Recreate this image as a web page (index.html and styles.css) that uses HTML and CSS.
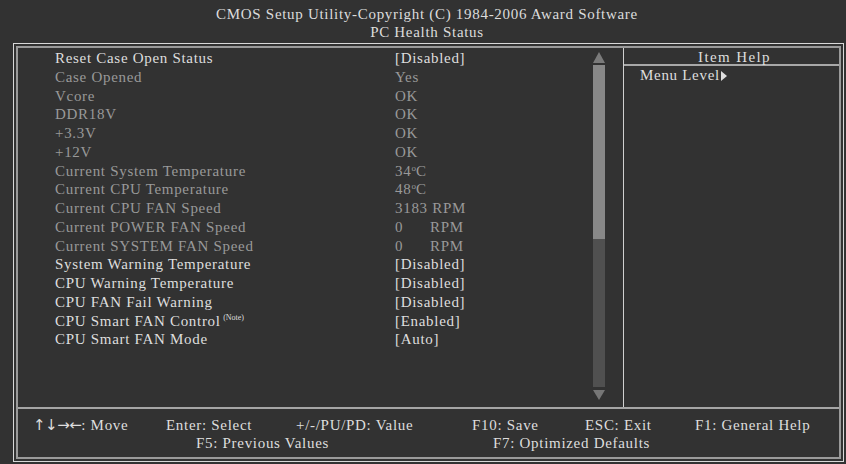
FILE: index.html
```html
<!DOCTYPE html>
<html lang="en">
<head>
  <meta charset="UTF-8" />
  <meta name="viewport" content="width=device-width, initial-scale=1" />
  <title>PC Health Status</title>
  <link rel="stylesheet" href="styles.css">
</head>
<body>
  <div id="title">
    <div>CMOS Setup Utility-Copyright (C) 1984-2006 Award Software</div>
    <div>PC Health Status</div>
  </div>

  <div id="frame">
    <div id="inner">
      <div id="main">
        <ul id="items">
          <li class="row"><span class="label">Reset Case Open Status</span><span>[Disabled]</span></li>
          <li class="row off"><span class="label">Case Opened</span><span>Yes</span></li>
          <li class="row off"><span class="label">Vcore</span><span>OK</span></li>
          <li class="row off"><span class="label">DDR18V</span><span>OK</span></li>
          <li class="row off"><span class="label">+3.3V</span><span>OK</span></li>
          <li class="row off"><span class="label">+12V</span><span>OK</span></li>
          <li class="row off"><span class="label">Current System Temperature</span><span>34<sup class="deg">o</sup>C</span></li>
          <li class="row off"><span class="label">Current CPU Temperature</span><span>48<sup class="deg">o</sup>C</span></li>
          <li class="row off"><span class="label">Current CPU FAN Speed</span><span>3183 RPM</span></li>
          <li class="row off"><span class="label">Current POWER FAN Speed</span><span><span class="num">0</span>RPM</span></li>
          <li class="row off"><span class="label">Current SYSTEM FAN Speed</span><span><span class="num">0</span>RPM</span></li>
          <li class="row"><span class="label">System Warning Temperature</span><span>[Disabled]</span></li>
          <li class="row"><span class="label">CPU Warning Temperature</span><span>[Disabled]</span></li>
          <li class="row"><span class="label">CPU FAN Fail Warning</span><span>[Disabled]</span></li>
          <li class="row"><span class="label">CPU Smart FAN Control <sup class="note">(Note)</sup></span><span>[Enabled]</span></li>
          <li class="row"><span class="label">CPU Smart FAN Mode</span><span>[Auto]</span></li>
        </ul>

        <div id="scroll">
          <span class="arrow up"></span>
          <span class="thumb"></span>
          <span class="track"></span>
          <span class="arrow down"></span>
        </div>

        <div id="help">
          <div class="help-head">Item Help</div>
          <div class="help-body">Menu Level<span class="tri"></span></div>
        </div>
      </div>

      <div id="keys">
        <div class="keys-top">
          <span><span class="arrows">&#8593;&#8595;&#8594;&#8592;</span>: Move</span>
          <span>Enter: Select</span>
          <span>+/-/PU/PD: Value</span>
          <span>F10: Save</span>
          <span>ESC: Exit</span>
          <span>F1: General Help</span>
        </div>
        <div class="keys-bottom">
          <span>F5: Previous Values</span>
          <span>F7: Optimized Defaults</span>
        </div>
      </div>
    </div>
  </div>
</body>
</html>
```

FILE: styles.css
```css
body {
  margin: 0;
  background: #323232;
  color: #dedede;
  font-family: "Liberation Serif", "Times New Roman", serif;
  font-size: 15px;
  letter-spacing: 0.7px;
  width: 846px;
  height: 464px;
  overflow: hidden;
}

#title {
  text-align: center;
  line-height: 18px;
  padding: 5px 0 0 8px;
  height: 38px;
  color: #dcdcdc;
}

#frame {
  margin-left: 13px;
  width: 831px;
  box-sizing: border-box;
  border: 1px solid #d8d8d8;
  padding: 2px;
}

#inner {
  border: 2px solid #9a9a9a;
}

#main {
  display: flex;
  height: 359px;
  border-bottom: 2px solid #a5a5a5;
}

#items {
  list-style: none;
  margin: 0;
  padding: 1px 0 0 37px;
  width: 538px;
}

.row {
  display: flex;
  line-height: 18.75px;
  height: 18.75px;
  white-space: nowrap;
}

.row.off {
  color: #999;
}

.label {
  width: 340px;
  flex: none;
}

.num {
  display: inline-block;
  width: 35px;
}

.deg {
  font-size: 9px;
  vertical-align: 5px;
  line-height: 0;
  letter-spacing: 0;
}

.note {
  font-size: 8px;
  vertical-align: 6px;
  line-height: 0;
  letter-spacing: 0;
  margin-left: -2px;
}

#scroll {
  width: 12px;
  margin-right: 18px;
  padding-top: 4px;
  display: flex;
  flex-direction: column;
}

.arrow {
  width: 0;
  height: 0;
  border-left: 6px solid transparent;
  border-right: 6px solid transparent;
}

.arrow.up {
  border-bottom: 11px solid #7b7b7b;
  margin-bottom: 2px;
}

.arrow.down {
  border-top: 10px solid #767676;
  margin-top: 3px;
}

.thumb {
  height: 174px;
  background: #888;
}

.track {
  height: 148px;
  background: #505050;
}

#help {
  width: 215px;
  border-left: 1px solid #d0d0d0;
}

.help-head {
  text-align: center;
  height: 18px;
  padding-top: 2px;
  line-height: 14px;
  box-sizing: border-box;
  border-bottom: 2px solid #a8a8a8;
  letter-spacing: 1.4px;
  padding-left: 6px;
}

.help-body {
  padding: 0 0 0 16px;
  line-height: 18px;
}

.tri {
  display: inline-block;
  width: 0;
  height: 0;
  border-left: 6px solid #dedede;
  border-top: 5px solid transparent;
  border-bottom: 5px solid transparent;
  margin-left: 1px;
  vertical-align: -1px;
}

#keys {
  height: 48px;
  padding-top: 7px;
  box-sizing: border-box;
  line-height: 18px;
  white-space: nowrap;
}

.arrows {
  font-family: "DejaVu Sans", sans-serif;
  font-size: 15px;
  letter-spacing: -0.5px;
}

.keys-top {
  display: grid;
  grid-template-columns: 133px 130px 176px 113px 110px auto;
  padding-left: 15px;
}

.keys-bottom {
  display: grid;
  grid-template-columns: 297px auto;
  padding-left: 178px;
}
```
